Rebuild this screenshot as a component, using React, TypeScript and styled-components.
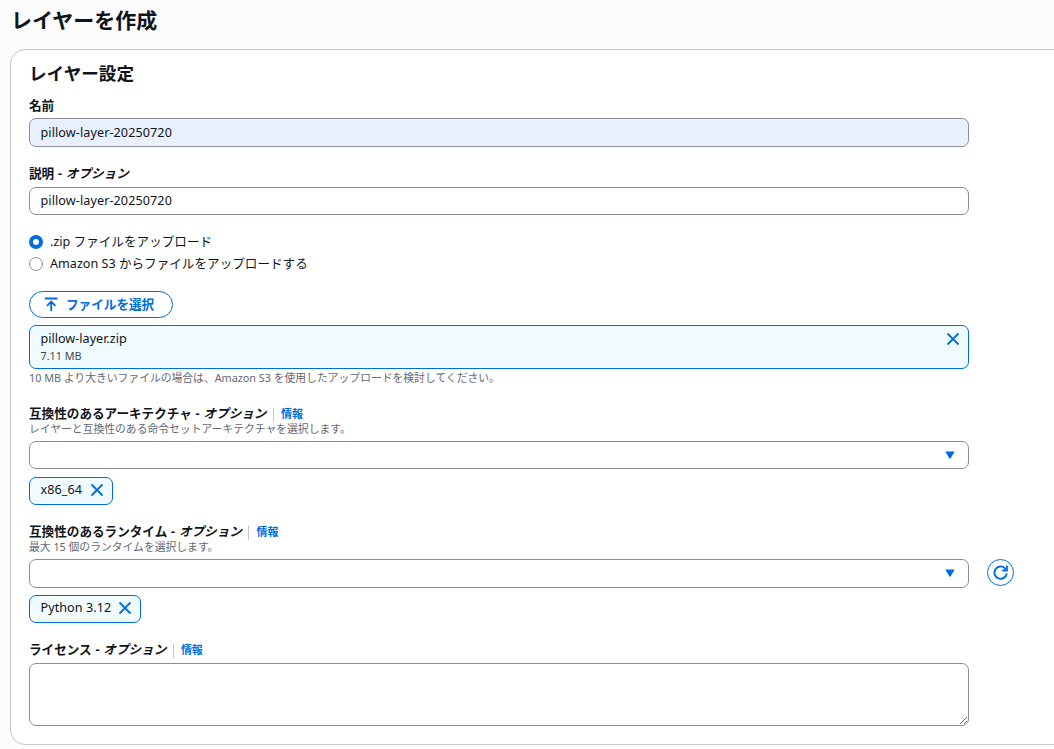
import React, { useState } from 'react';
import styled, { createGlobalStyle, css } from 'styled-components';

const blue = '#006ce0';
const ink = '#0f141a';
const muted = '#656871';
const edge = '#8c8c94';

const GlobalStyle = createGlobalStyle`
  *, *::before, *::after { box-sizing: border-box; }
  body {
    margin: 0;
    height: 749px;
    overflow: hidden;
    background: #fcfcfd;
    color: ${ink};
    font-family: "Noto Sans", "Noto Sans CJK JP", sans-serif;
    font-size: 12.6px;
  }
`;

const Page = styled.main`
  height: 749px;
  padding-left: 10px;
  overflow: hidden;
`;

const PageTitle = styled.h1`
  margin: 0 0 9px 1px;
  height: 40px;
  line-height: 40px;
  font-size: 21px;
  font-weight: 700;
  white-space: nowrap;
`;

const Card = styled.section`
  width: 1080px;
  height: 696px;
  padding: 10px 18px 0;
  border: 1px solid #c6c6cd;
  border-radius: 15px;
  background: #fff;
`;

const CardTitle = styled.h2`
  margin: 0 0 5px;
  height: 27px;
  line-height: 27px;
  font-size: 17.6px;
  font-weight: 700;
`;

const Field = styled.div<{ $gap: number }>`
  width: 940px;
  margin-bottom: ${(p) => p.$gap}px;
`;

const LabelRow = styled.div<{ $height: number; $top?: number; $bottom?: number }>`
  display: flex;
  align-items: center;
  height: ${(p) => p.$height}px;
  padding-top: ${(p) => p.$top ?? 0}px;
  padding-bottom: ${(p) => p.$bottom ?? 0}px;
  white-space: nowrap;
`;

const Label = styled.label`
  font-size: 12.6px;
  line-height: 18px;
  font-weight: 700;
  word-spacing: 0.5px;
`;

const InfoLink = styled.a`
  height: 14px;
  line-height: 12px;
  margin: 2px 0 0 6.6px;
  padding-left: 7px;
  border-left: 1px solid #c6c6cd;
  color: ${blue};
  font-size: 11px;
  font-weight: 700;
`;

const Hint = styled.p`
  margin: 0;
  height: 20px;
  line-height: 15px;
  font-size: 10.8px;
  color: ${muted};
  white-space: nowrap;
`;

const control = css`
  display: block;
  width: 940px;
  border: 1px solid ${edge};
  border-radius: 7px;
  background: #fff;
  color: ${ink};
  font-family: inherit;
  font-size: 12.6px;
  outline: none;
`;

const Input = styled.input<{ $filled?: boolean }>`
  ${control}
  height: ${(p) => (p.$filled ? 29 : 28)}px;
  padding: 0 10px 1px 10.5px;
  letter-spacing: 0.09px;
  background: ${(p) => (p.$filled ? '#e8f0fe' : '#fff')};
`;

const TextArea = styled.textarea`
  ${control}
  height: 63px;
  resize: vertical;
`;

const SelectBox = styled.div<{ $height: number }>`
  ${control}
  display: flex;
  flex-shrink: 0;
  align-items: center;
  justify-content: flex-end;
  height: ${(p) => p.$height}px;
  padding: 0 13px ${(p) => p.$height - 28}px 0;
`;

const SelectRow = styled.div`
  display: flex;
  gap: 18px;
  width: 985px;
  height: 28px;
`;

const RefreshButton = styled.button`
  display: grid;
  place-items: center;
  width: 27px;
  height: 27px;
  padding: 0;
  border: 1px solid ${blue};
  border-radius: 50%;
  background: #fff;
`;

const RadioGroup = styled.div`
  display: flex;
  flex-direction: column;
  margin: 14px 0 18px;
`;

const RadioRow = styled.label`
  display: flex;
  align-items: center;
  gap: 7px;
  height: 22px;
  white-space: nowrap;
`;

const RadioDot = styled.span<{ $checked: boolean }>`
  width: 14px;
  height: 14px;
  margin-top: 3px;
  border: ${(p) => (p.$checked ? `4px solid ${blue}` : `1px solid ${edge}`)};
  border-radius: 50%;
  background: #fff;
`;

const UploadButton = styled.button`
  display: flex;
  align-items: center;
  gap: 8px;
  width: 144px;
  height: 27px;
  margin-bottom: 7px;
  padding: 0 0 2px 14px;
  border: 1px solid ${blue};
  border-radius: 14px;
  background: #fff;
  color: ${blue};
  font: 700 12.6px "Noto Sans", "Noto Sans CJK JP", sans-serif;
  white-space: nowrap;
`;

const FileCard = styled.div`
  display: flex;
  justify-content: space-between;
  width: 940px;
  height: 44px;
  margin-bottom: 1px;
  padding: 4px 8px 0 10.5px;
  border: 1px solid ${blue};
  border-radius: 7px;
  background: #f0fbff;
`;

const FileName = styled.div`
  height: 18px;
  line-height: 18px;
`;

const FileSize = styled.div`
  height: 16px;
  line-height: 15px;
  font-size: 10.8px;
  color: #424650;
`;

const IconButton = styled.button`
  display: flex;
  width: 14px;
  height: 18px;
  padding: 0;
  align-items: center;
  justify-content: center;
  border: 0;
  background: none;
`;

const Tag = styled.div<{ $width: number }>`
  display: flex;
  align-items: center;
  justify-content: space-between;
  width: ${(p) => p.$width}px;
  height: 28px;
  margin-top: 8px;
  padding: 0 8px 2px 10.5px;
  border: 1px solid ${blue};
  border-radius: 7px;
  background: #f0fbff;
  letter-spacing: 0.06px;
  white-space: nowrap;
`;

const TagText = styled.span`
  padding-bottom: 1px;
`;

const CloseIcon = () => (
  <svg width="14" height="14" viewBox="0 0 14 14" fill="none" stroke={blue} strokeWidth="1.8">
    <path d="M1.5 1.5l11 11M12.5 1.5l-11 11" />
  </svg>
);

const CaretIcon = () => (
  <svg width="10" height="8" viewBox="0 0 10 8" fill={blue}>
    <path d="M1 .5h8a.4.4 0 0 1 .3.7L5.5 7.4a.6.6 0 0 1-1 0L.7 1.2A.4.4 0 0 1 1 .5z" />
  </svg>
);

const UploadIcon = () => (
  <svg width="14" height="14" viewBox="0 0 14 14" fill="none" stroke={blue} strokeWidth="1.8">
    <path d="M.9 1.5h12.6M7.2 14V5M3 8.8l4.2-4.2 4.2 4.2" />
  </svg>
);

const RefreshIcon = () => (
  <svg width="15" height="15" viewBox="0 0 15 15" fill="none" stroke={blue} strokeWidth="1.9">
    <path d="M13.8 8.4a6.2 6.2 0 1 1-1.7-5.1l1.4 1.7" />
    <path d="M13.9.6v4.9H9.2" />
  </svg>
);

function Optional({ children }: { children: React.ReactNode }) {
  return (
    <>
      {children} - <i>オプション</i>
    </>
  );
}

export default function App() {
  const [source, setSource] = useState('zip');
  return (
    <>
      <GlobalStyle />
      <Page>
        <PageTitle>レイヤーを作成</PageTitle>
        <Card>
          <CardTitle>レイヤー設定</CardTitle>

          <Field $gap={15}>
            <LabelRow $height={26} $top={2}>
              <Label>名前</Label>
            </LabelRow>
            <Input $filled defaultValue="pillow-layer-20250720" />
          </Field>

          <Field $gap={0}>
            <LabelRow $height={25} $bottom={2}>
              <Label>
                <Optional>説明</Optional>
              </Label>
            </LabelRow>
            <Input defaultValue="pillow-layer-20250720" />
          </Field>

          <RadioGroup>
            <RadioRow onClick={() => setSource('zip')}>
              <RadioDot $checked={source === 'zip'} />
              <span>.zip ファイルをアップロード</span>
            </RadioRow>
            <RadioRow onClick={() => setSource('s3')}>
              <RadioDot $checked={source === 's3'} />
              <span>Amazon S3 からファイルをアップロードする</span>
            </RadioRow>
          </RadioGroup>

          <Field $gap={16}>
            <UploadButton>
              <UploadIcon />
              ファイルを選択
            </UploadButton>
            <FileCard>
              <div>
                <FileName>pillow-layer.zip</FileName>
                <FileSize>7.11 MB</FileSize>
              </div>
              <IconButton aria-label="削除">
                <CloseIcon />
              </IconButton>
            </FileCard>
            <Hint>10 MB より大きいファイルの場合は、Amazon S3 を使用したアップロードを検討してください。</Hint>
          </Field>

          <Field $gap={18}>
            <LabelRow $height={15}>
              <Label>
                <Optional>互換性のあるアーキテクチャ</Optional>
              </Label>
              <InfoLink>情報</InfoLink>
            </LabelRow>
            <Hint>レイヤーと互換性のある命令セットアーキテクチャを選択します。</Hint>
            <SelectBox $height={28}>
              <CaretIcon />
            </SelectBox>
            <Tag $width={84}>
              <TagText>x86_64</TagText>
              <IconButton aria-label="x86_64 を削除">
                <CloseIcon />
              </IconButton>
            </Tag>
          </Field>

          <Field $gap={15}>
            <LabelRow $height={16} $top={2}>
              <Label>
                <Optional>互換性のあるランタイム</Optional>
              </Label>
              <InfoLink>情報</InfoLink>
            </LabelRow>
            <Hint>最大 15 個のランタイムを選択します。</Hint>
            <SelectRow>
              <SelectBox $height={29}>
                <CaretIcon />
              </SelectBox>
              <RefreshButton aria-label="更新">
                <RefreshIcon />
              </RefreshButton>
            </SelectRow>
            <Tag $width={112}>
              <TagText>Python 3.12</TagText>
              <IconButton aria-label="Python 3.12 を削除">
                <CloseIcon />
              </IconButton>
            </Tag>
          </Field>

          <Field $gap={0}>
            <LabelRow $height={25} $bottom={2}>
              <Label>
                <Optional>ライセンス</Optional>
              </Label>
              <InfoLink>情報</InfoLink>
            </LabelRow>
            <TextArea />
          </Field>
        </Card>
      </Page>
    </>
  );
}
